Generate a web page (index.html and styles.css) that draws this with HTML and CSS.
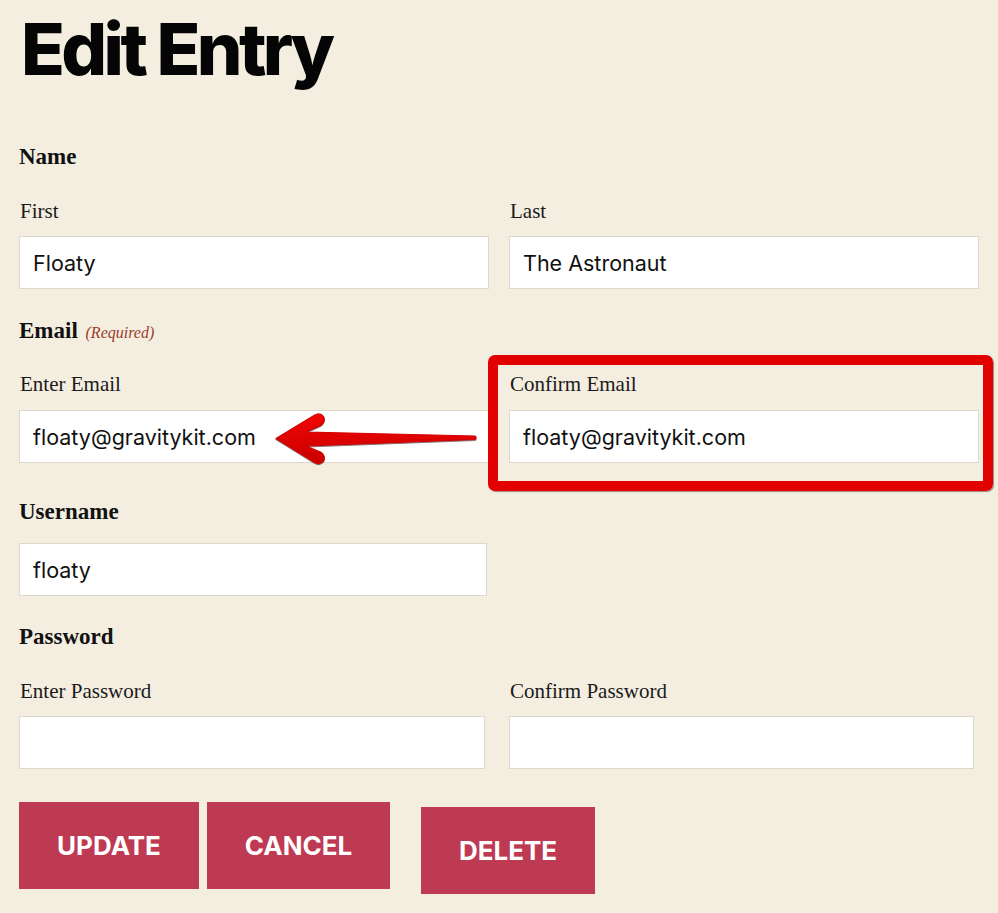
FILE: index.html
```html
<!DOCTYPE html>
<html lang="en">
<head>
<meta charset="utf-8">
<title>Edit Entry</title>
<link rel="stylesheet" href="styles.css">
</head>
<body>
<div class="page">
  <h1 class="title">Edit Entry</h1>
  <form class="form">
    <div class="field field-name">
      <div class="field-label">Name</div>
      <div class="cols">
        <div class="sub">
          <label class="sub-label">First</label>
          <input class="text-input" type="text" value="Floaty">
        </div>
        <div class="sub">
          <label class="sub-label">Last</label>
          <input class="text-input" type="text" value="The Astronaut">
        </div>
      </div>
    </div>

    <div class="field field-email">
      <div class="field-label">Email <span class="required">(Required)</span></div>
      <div class="cols">
        <div class="sub">
          <label class="sub-label">Enter Email</label>
          <input class="text-input" type="text" value="floaty@gravitykit.com">
        </div>
        <div class="sub">
          <label class="sub-label">Confirm Email</label>
          <input class="text-input" type="text" value="floaty@gravitykit.com">
        </div>
      </div>
      <div class="highlight-box"></div>
      <svg class="arrow" viewBox="270 410 210 58" width="210" height="58" aria-hidden="true">
        <defs>
          <linearGradient id="ag" x1="0" y1="0" x2="0" y2="1">
            <stop offset="0" stop-color="#f20505"/>
            <stop offset="1" stop-color="#c90000"/>
          </linearGradient>
        </defs>
        <path d="M276,438.5 L314,415.5 Q320,412 323.5,416.5 Q326,421.5 320.5,425.5 L306,432 L475,436 Q477,437.5 475,439.5 L306,446 L320.5,452 Q326,456 323.5,461 Q320,465.5 314,462 Z" fill="url(#ag)" stroke="#d40000" stroke-width="1.2" stroke-linejoin="round"/>
      </svg>
    </div>

    <div class="field field-username">
      <div class="field-label">Username</div>
      <input class="text-input input-username" type="text" value="floaty">
    </div>

    <div class="field field-password">
      <div class="field-label">Password</div>
      <div class="cols cols-password">
        <div class="sub">
          <label class="sub-label">Enter Password</label>
          <input class="text-input" type="password" value="">
        </div>
        <div class="sub">
          <label class="sub-label">Confirm Password</label>
          <input class="text-input" type="password" value="">
        </div>
      </div>
    </div>

    <div class="actions">
      <button type="button" class="btn btn-update">UPDATE</button>
      <button type="button" class="btn btn-cancel">CANCEL</button>
      <button type="button" class="btn btn-delete">DELETE</button>
    </div>
  </form>
</div>
</body>
</html>
```

FILE: styles.css
```css
* {
  box-sizing: border-box;
}

html, body {
  margin: 0;
  padding: 0;
}

body {
  background: #f4eee1;
  color: #111;
  font-family: "Liberation Serif", "Times New Roman", serif;
}

.page {
  padding: 12px 0 0 19px;
  width: 998px;
}

.title {
  margin: 0 0 0 2px;
  font-family: Inter, "Noto Sans", sans-serif;
  font-weight: 800;
  font-size: 72px;
  line-height: 73px;
  letter-spacing: -0.05em;
  color: #050505;
}

.form {
  display: flex;
  flex-direction: column;
}

.field {
  position: relative;
}

.field-name {
  margin-top: 60px;
}

.field-email {
  margin-top: 30px;
}

.field-username {
  margin-top: 37px;
}

.field-password {
  margin-top: 29px;
}

.field-label {
  font-weight: bold;
  font-size: 23px;
  line-height: 24px;
  color: #111;
}

.required {
  font-weight: normal;
  font-style: italic;
  font-size: 16px;
  color: #9b3b2b;
  margin-left: 2px;
}

.cols {
  display: grid;
  grid-template-columns: 470px 470px;
  column-gap: 20px;
  margin-top: 30px;
}

.field-email .cols {
  margin-top: 27px;
}

.cols-password {
  grid-template-columns: 466px 465px;
  column-gap: 24px;
  margin-top: 30px;
}

.sub {
  display: flex;
  flex-direction: column;
}

.sub-label {
  display: block;
  font-size: 21px;
  line-height: 24px;
  color: #1a1a1a;
  margin-left: 1px;
  margin-bottom: 13px;
}

.field-email .sub-label {
  margin-bottom: 14px;
}

.text-input {
  display: block;
  width: 100%;
  height: 53px;
  margin: 0;
  padding: 0 13px;
  border: 1px solid #ddd8cc;
  border-radius: 0;
  background: #fff;
  font-family: Inter, "Noto Sans", sans-serif;
  font-size: 21.5px;
  color: #111;
  outline: none;
}

.input-username {
  width: 468px;
  margin-top: 19px;
}

.highlight-box {
  position: absolute;
  left: 469px;
  top: 36px;
  width: 505px;
  height: 136px;
  border: 10px solid #e20000;
  border-radius: 7px;
  box-shadow: 1px 1px 1px rgba(60, 0, 0, 0.45);
  pointer-events: none;
}

.arrow {
  position: absolute;
  left: 251px;
  top: 91px;
  overflow: visible;
  filter: drop-shadow(0.5px 1px 0.5px rgba(40, 0, 0, 0.55));
}

.actions {
  display: flex;
  align-items: flex-start;
  gap: 8px;
  margin-top: 33px;
}

.btn {
  height: 87px;
  border: none;
  border-radius: 0;
  background: #be3a52;
  color: #fff;
  font-family: Inter, "Noto Sans", sans-serif;
  font-weight: 700;
  font-size: 26px;
  padding: 0;
  cursor: pointer;
}

.btn-update {
  width: 180px;
}

.btn-cancel {
  width: 183px;
}

.btn-delete {
  width: 174px;
  margin-left: 23px;
  margin-top: 5px;
}
```
